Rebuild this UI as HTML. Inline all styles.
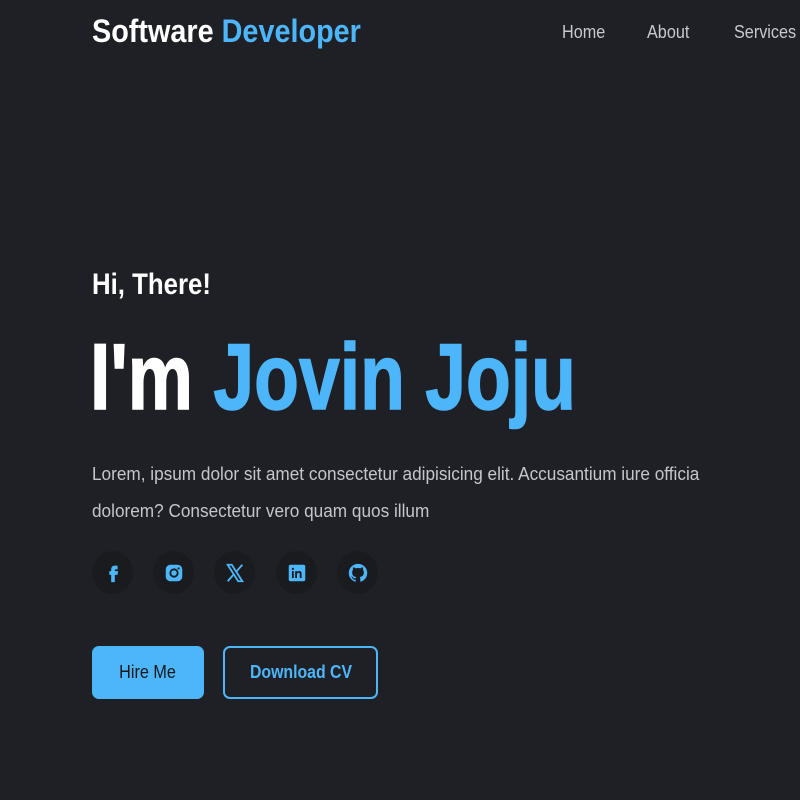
<!DOCTYPE html>
<html><head><style>
body{margin:0;width:800px;height:800px;background:#1e2025;font-family:"Liberation Sans",sans-serif;overflow:hidden;position:relative}
.s{position:absolute;white-space:nowrap;transform-origin:0 0}
.a{color:#4db5f9}
.c{position:absolute;top:551px;width:41px;height:43px;border-radius:50%;background:#1a1b1f;display:flex;align-items:center;justify-content:center}
.c svg{width:22px;height:22px}
.btn{position:absolute;top:646px;height:53px;border-radius:7px;box-sizing:border-box;display:flex;align-items:center;justify-content:center;font-size:18px}
</style></head><body>
<div class="s" style="left:92px;top:13px;font-size:32px;font-weight:bold;color:#fff;transform:scaleX(.9)">Software <span class="a">Developer</span></div>
<div class="s" style="left:562px;top:22px;font-size:18px;color:#c8c9d0;transform:scaleX(.9)">Home</div>
<div class="s" style="left:647px;top:22px;font-size:18px;color:#c8c9d0;transform:scaleX(.9)">About</div>
<div class="s" style="left:734px;top:22px;font-size:18px;color:#c8c9d0;transform:scaleX(.9)">Services</div>
<div class="s" style="left:92px;top:268px;font-size:30px;font-weight:bold;color:#fff;transform:scaleX(.86)">Hi, There!</div>
<div class="s" style="left:90px;top:330px;font-size:94px;font-weight:bold;color:#fff;line-height:1;transform:scaleX(.78);-webkit-text-stroke:1.5px currentColor">I'm <span class="a">Jovin Joju</span></div>
<div class="s" style="left:92px;top:464px;font-size:18px;color:#c5c6cc;transform:scaleX(.955)">Lorem, ipsum dolor sit amet consectetur adipisicing elit. Accusantium iure officia</div>
<div class="s" style="left:92px;top:501px;font-size:18px;color:#c5c6cc;transform:scaleX(.955)">dolorem? Consectetur vero quam quos illum</div>

<div class="c" style="left:92px"><svg viewBox="0 0 24 24"><path fill="#4db5f9" d="M14 8h3V4h-3c-2.5 0-4 1.7-4 4v2H8v4h2v8h4v-8h3l.5-4H14V8.5c0-.3.2-.5.5-.5z"/></svg></div>
<div class="c" style="left:153px"><svg viewBox="0 0 24 24"><rect x="3" y="3" width="18" height="18" rx="5" fill="#4db5f9"/><circle cx="12" cy="12" r="4" fill="none" stroke="#1a1b1f" stroke-width="2"/><circle cx="17" cy="7" r="1.2" fill="#1a1b1f"/></svg></div>
<div class="c" style="left:214px"><svg viewBox="0 0 24 24"><path fill="none" stroke="#4db5f9" stroke-width="2" d="M4 3h4.5L20 21h-4.5zM20 3l-7 8M4 21l7-8"/></svg></div>
<div class="c" style="left:276px"><svg viewBox="0 0 24 24"><rect x="3" y="3" width="18" height="18" rx="2" fill="#4db5f9"/><path fill="#1a1b1f" d="M6.5 10h2v7.5h-2zM7.5 6.3a1.2 1.2 0 110 2.4 1.2 1.2 0 010-2.4zM10 10h2v1c.5-.8 1.3-1.2 2.4-1.2 2 0 2.6 1.3 2.6 3.2v4.5h-2v-4c0-1-.2-1.8-1.2-1.8s-1.8.7-1.8 1.9v3.9h-2z"/></svg></div>
<div class="c" style="left:337px"><svg viewBox="0 0 24 24"><path fill="#4db5f9" d="M12 2a10 10 0 00-3.2 19.5c.5.1.7-.2.7-.5v-1.8c-2.8.6-3.4-1.3-3.4-1.3-.5-1.2-1.1-1.5-1.1-1.5-.9-.6.1-.6.1-.6 1 .1 1.5 1 1.5 1 .9 1.5 2.4 1.1 3 .8.1-.6.3-1.1.6-1.3-2.2-.3-4.6-1.1-4.6-5 0-1.1.4-2 1-2.7-.1-.3-.4-1.300.1-2.7 0 0 .8-.3 2.8 1a9.6 9.6 0 015 0c1.9-1.3 2.8-1 2.8-1 .5 1.4.2 2.4.1 2.7.6.7 1 1.6 1 2.7 0 3.900-2.4 4.7-4.6 5 .4.3.7.9.7 1.9V21c0 .3.2.6.7.5A10 10 0 0012 2z"/></svg></div>

<div class="btn" style="left:92px;width:112px;background:#4db5f9;color:#15171b"><span style="display:inline-block;transform:scaleX(.9)">Hire Me</span></div>
<div class="btn" style="left:223px;width:155px;border:2px solid #4db5f9;color:#4db5f9;font-weight:bold"><span style="display:inline-block;transform:scaleX(.88)">Download CV</span></div>
</body></html>
